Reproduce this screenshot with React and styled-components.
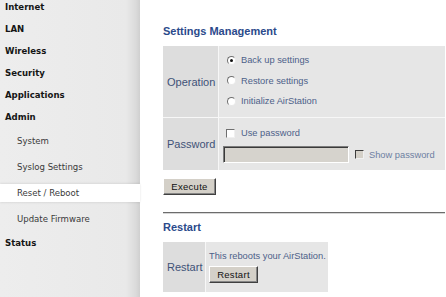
import React from 'react';
import styled, { createGlobalStyle } from 'styled-components';

const GlobalStyle = createGlobalStyle`
  html, body {
    margin: 0;
    padding: 0;
    background: #fff;
  }
  body {
    font-family: "Liberation Sans", Arial, sans-serif;
  }
`;

const Page = styled.div`
  display: flex;
  width: 446px;
  min-height: 297px;
  overflow: hidden;
`;

const Sidebar = styled.nav`
  width: 140px;
  flex-shrink: 0;
  background: linear-gradient(to right, #ededed 0, #e9e9e9 126px, #dadada 136px, #cfcfcf 140px);
`;

const Menu = styled.ul`
  display: flex;
  flex-direction: column;
  list-style: none;
  margin: -4px 0 0;
  padding: 0;
`;

const TopItem = styled.li`
  height: 22px;
  padding-left: 5px;
  font: bold 9.5px/22px "DejaVu Sans Condensed", "DejaVu Sans", sans-serif;
  font-stretch: condensed;
  color: #151515;
`;

const SubItem = styled.li`
  height: 18px;
  margin: 4px 0;
  padding-left: 17px;
  font: 9.5px/18px "DejaVu Sans Condensed", "DejaVu Sans", sans-serif;
  font-stretch: condensed;
  color: #3a3a3a;
  background: ${p => (p.$active ? '#fff' : 'transparent')};
  box-shadow: ${p => (p.$active ? '0 -1px 2px rgba(0,0,0,0.07), 0 1px 2px rgba(0,0,0,0.07)' : 'none')};
`;

const Main = styled.main`
  flex: 1;
  padding: 25px 1px 0 23px;
  color: #43567c;
`;

const Heading = styled.h2`
  margin: 0 0 8px;
  font: bold 11px/13px "Liberation Sans", Arial, sans-serif;
  color: #2b4a8b;
`;

const Table = styled.div`
  display: grid;
  grid-template-columns: ${p => p.$labelWidth}px ${p => (p.$fill ? '1fr' : 'auto')};
  gap: 1px;
  width: ${p => (p.$fill ? 'auto' : 'max-content')};
  background: #f7f7f7;
`;

const LabelCell = styled.div`
  display: flex;
  align-items: center;
  padding-left: 4px;
  background: #dddddd;
  font-size: 11px;
  color: #3f5278;
`;

const ValueCell = styled.div`
  background: #e6e6e6;
  padding: ${p => p.$pad};
  font-size: 9.3px;
  color: #4d6189;
`;

const OptionRow = styled.label`
  display: flex;
  align-items: center;
  height: ${p => p.$h || 20.5}px;
  margin-top: ${p => p.$gap || 0}px;
  color: ${p => (p.$muted ? '#6d80a2' : 'inherit')};
`;

const Radio = styled.span`
  position: relative;
  box-sizing: border-box;
  width: 9px;
  height: 9px;
  margin: 0 5px 0 4px;
  border-radius: 50%;
  border: 1px solid;
  border-color: #6f6f6f #e8e8e8 #e8e8e8 #6f6f6f;
  background: #fff;

  &::after {
    content: '';
    display: ${p => (p.$checked ? 'block' : 'none')};
    position: absolute;
    left: 2px;
    top: 2px;
    width: 3px;
    height: 3px;
    border-radius: 50%;
    background: #111;
  }
`;

const Check = styled.span`
  box-sizing: border-box;
  width: 9px;
  height: 9px;
  margin: 0 ${p => p.$after}px 0 ${p => p.$before}px;
  border: 1px solid;
  border-color: ${p => (p.$disabled ? '#3c3c3c #f0f0f0 #f0f0f0 #3c3c3c' : '#6f6f6f #f0f0f0 #f0f0f0 #6f6f6f')};
  background: ${p => (p.$disabled ? '#d4d0c8' : '#fff')};
`;

const TextBox = styled.span`
  box-sizing: border-box;
  width: 126px;
  height: 17px;
  border: 1px solid;
  border-color: #7c7c7c #ffffff #ffffff #7c7c7c;
  box-shadow: inset 1px 1px 0 #3a3a3a;
  background: #d6d3cd;
`;

const Button = styled.button`
  display: block;
  box-sizing: border-box;
  width: ${p => p.$w}px;
  height: 17px;
  margin-top: ${p => p.$top}px;
  padding: 0;
  border: 1px solid;
  border-color: #ffffff #404040 #404040 #ffffff;
  box-shadow: inset -1px -1px 0 #868686;
  background: #d4d0c8;
  font: 9.5px "Liberation Sans", Arial, sans-serif;
  letter-spacing: 0.3px;
  color: #111;
`;

const Rule = styled.hr`
  margin: 17px 0 7px;
  height: 0;
  border: 0;
  border-top: 1px solid #6c6c6c;
  border-bottom: 1px solid #d6d6d6;
`;

const Note = styled.div`
  line-height: 14px;
`;

const menu = [
  { label: 'Internet' },
  { label: 'LAN' },
  { label: 'Wireless' },
  { label: 'Security' },
  { label: 'Applications' },
  { label: 'Admin' },
  { label: 'System', sub: true },
  { label: 'Syslog Settings', sub: true },
  { label: 'Reset / Reboot', sub: true, active: true },
  { label: 'Update Firmware', sub: true },
  { label: 'Status' },
];

const operations = [
  { label: 'Back up settings', checked: true },
  { label: 'Restore settings' },
  { label: 'Initialize AirStation' },
];

export default function App() {
  return (
    <>
      <GlobalStyle />
      <Page>
        <Sidebar>
          <Menu>
            {menu.map(item =>
              item.sub ? (
                <SubItem key={item.label} $active={item.active}>{item.label}</SubItem>
              ) : (
                <TopItem key={item.label}>{item.label}</TopItem>
              )
            )}
          </Menu>
        </Sidebar>

        <Main>
          <Heading>Settings Management</Heading>
          <Table $labelWidth={55} $fill>
            <LabelCell>Operation</LabelCell>
            <ValueCell $pad="4px 0 5.5px 4px">
              {operations.map(op => (
                <OptionRow key={op.label}>
                  <Radio $checked={op.checked} />
                  {op.label}
                </OptionRow>
              ))}
            </ValueCell>

            <LabelCell>Password</LabelCell>
            <ValueCell $pad="7px 0 7px 4px">
              <OptionRow $h={16}>
                <Check $before={3} $after={6} />
                Use password
              </OptionRow>
              <OptionRow $h={17} $gap={5} $muted>
                <TextBox />
                <Check $before={6} $after={5} $disabled />
                Show password
              </OptionRow>
            </ValueCell>
          </Table>

          <Button $w={53} $top={8}>Execute</Button>

          <Rule />

          <Heading>Restart</Heading>
          <Table $labelWidth={42}>
            <LabelCell>Restart</LabelCell>
            <ValueCell $pad="7px 2px 9px 3px">
              <Note>This reboots your AirStation.</Note>
              <Button $w={49} $top={3}>Restart</Button>
            </ValueCell>
          </Table>
        </Main>
      </Page>
    </>
  );
}
